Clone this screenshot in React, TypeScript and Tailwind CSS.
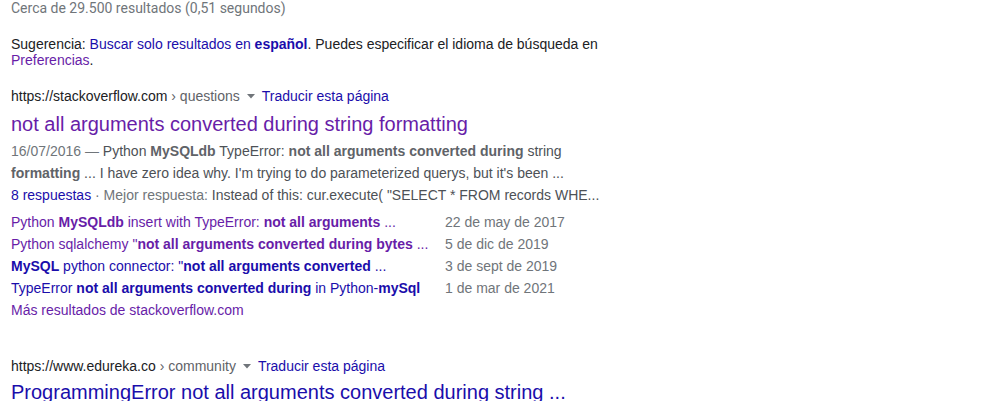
const purple = "text-[#681da8]";

const Caret = () => (
  <svg width="8" height="8" viewBox="0 0 8 8" className="mx-[7px] inline-block">
    <path d="M0 2h8L4 6.5z" fill="#70757a" />
  </svg>
);

const UrlLine = ({ host, path }: { host: string; path: string }) => (
  <div className="flex items-center text-[14px] leading-5">
    <span className="text-[#202124]">{host}</span>
    <span className="text-[#5f6368]">&nbsp;› {path}</span>
    <Caret />
    <span className="text-[#1a0dab]">Traducir esta página</span>
  </div>
);

const sitelinks = [
  {
    color: purple,
    date: "22 de may de 2017",
    parts: [
      ["Python ", false],
      ["MySQLdb", true],
      [" insert with TypeError: ", false],
      ["not all arguments", true],
      [" ...", false],
    ],
  },
  {
    color: purple,
    date: "5 de dic de 2019",
    parts: [
      ["Python sqlalchemy \"", false],
      ["not all arguments converted during bytes", true],
      [" ...", false],
    ],
  },
  {
    color: "text-[#1a0dab]",
    date: "3 de sept de 2019",
    parts: [
      ["MySQL", true],
      [" python connector: \"", false],
      ["not all arguments converted", true],
      [" ...", false],
    ],
  },
  {
    color: "text-[#1a0dab]",
    date: "1 de mar de 2021",
    parts: [
      ["TypeError ", false],
      ["not all arguments converted during", true],
      [" in Python-", false],
      ["mySql", true],
    ],
  },
] as const;

export default function App() {
  return (
    <div className="min-h-[401px] w-[989px] overflow-hidden bg-white pl-[11px] font-['Liberation_Sans',Arial,sans-serif]">
      {/* Result stats */}
      <div className="font-['Roboto',sans-serif] text-[14px] leading-4 text-[#70757a]">
        Cerca de 29.500 resultados (0,51 segundos)
      </div>

      {/* Language suggestion */}
      <div className="mt-5 w-[600px] text-[14px] leading-4 text-[#202124]">
        Sugerencia: <span className="text-[#1a0dab]">Buscar solo resultados en <b>español</b></span>. Puedes especificar el idioma de búsqueda en{" "}
        <span className={purple}>Preferencias</span>.
      </div>

      {/* First result */}
      <div className="mt-[18px]">
        <UrlLine host="https://stackoverflow.com" path="questions" />
        <div className={`mt-[5px] text-[20px] leading-[26px] ${purple}`}>
          not all arguments converted during string formatting
        </div>
        <div className="mt-[3px] text-[14px] leading-[22px] text-[#4d5156]">
          <div>
            <span className="text-[#70757a]">16/07/2016 — </span>Python <b className="text-[#5f6368]">MySQLdb</b> TypeError:{" "}
            <b className="text-[#5f6368]">not all arguments converted during</b> string
          </div>
          <div>
            <b className="text-[#5f6368]">formatting</b> ... I have zero idea why. I'm trying to do parameterized querys, but it's been ...
          </div>
          <div>
            <span className="text-[#1a0dab]">8 respuestas</span>
            <span className="text-[#70757a]"> · Mejor respuesta: </span>
            Instead of this: cur.execute( "SELECT * FROM records WHE...
          </div>
        </div>

        {/* Sitelinks */}
        <div className="mt-[5px] grid grid-cols-[434px_auto] text-[14px] leading-[22px]">
          {sitelinks.map((s, i) => (
            <div key={i} className="contents">
              <div className={s.color}>
                {s.parts.map(([t, bold], j) =>
                  bold ? <b key={j}>{t}</b> : <span key={j}>{t}</span>
                )}
              </div>
              <div className="text-[#70757a]">{s.date}</div>
            </div>
          ))}
        </div>
        <div className={`text-[14px] leading-[22px] ${purple}`}>Más resultados de stackoverflow.com</div>
      </div>

      {/* Second result */}
      <div className="mt-[35px]">
        <UrlLine host="https://www.edureka.co" path="community" />
        <div className="mt-[3px] text-[20px] leading-[26px] text-[#1a0dab]">
          ProgrammingError not all arguments converted during string ...
        </div>
      </div>
    </div>
  );
}
